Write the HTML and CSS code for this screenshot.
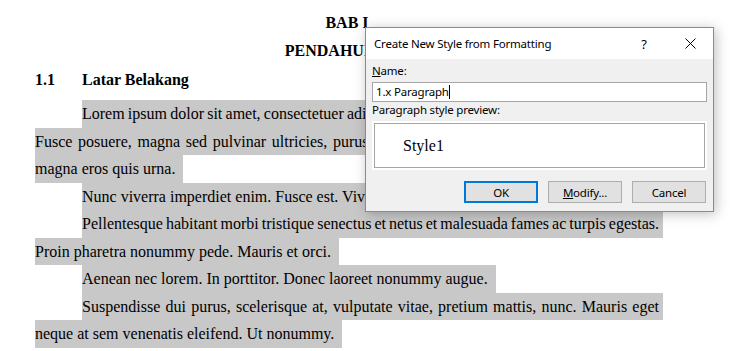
FILE: index.html
```html
<!DOCTYPE html>
<html lang="id">
<head>
    <meta charset="UTF-8">
    <meta name="viewport" content="width=device-width, initial-scale=1.0">
    <title>BAB I - Pendahuluan</title>
    <link rel="stylesheet" href="styles.css">
</head>
<body>
    <div class="page">
        <div class="title">BAB I</div>
        <div class="title">PENDAHULUAN</div>
        <div class="subhead"><span class="num">1.1</span>Latar Belakang</div>

        <div class="para">
            <div class="ln first just">Lorem ipsum dolor sit amet, consectetuer adipiscing elit. Maecenas porttitor congue massa.</div>
            <div class="ln just">Fusce posuere, magna sed pulvinar ultricies, purus lectus malesuada libero, sit amet commodo</div>
            <div class="ln last">magna eros quis urna.</div>
        </div>
        <div class="para">
            <div class="ln first last">Nunc viverra imperdiet enim. Fusce est. Vivamus a tellus.</div>
        </div>
        <div class="para">
            <div class="ln first just">Pellentesque habitant morbi tristique senectus et netus et malesuada fames ac turpis egestas.</div>
            <div class="ln last">Proin pharetra nonummy pede. Mauris et orci.</div>
        </div>
        <div class="para">
            <div class="ln first last">Aenean nec lorem. In porttitor. Donec laoreet nonummy augue.</div>
        </div>
        <div class="para">
            <div class="ln first just">Suspendisse dui purus, scelerisque at, vulputate vitae, pretium mattis, nunc. Mauris eget</div>
            <div class="ln last">neque at sem venenatis eleifend. Ut nonummy.</div>
        </div>
    </div>

    <!-- dialog Word: Create New Style from Formatting -->
    <div class="dialog">
        <div class="dlg-head">
            <span class="dlg-title">Create New Style from Formatting</span>
            <span class="cap-btn">?</span>
            <span class="cap-btn">
                <svg width="11" height="11" viewBox="0 0 11 11">
                    <path d="M0.5 0.5 L10.5 10.5 M10.5 0.5 L0.5 10.5" stroke="#000" stroke-width="1" fill="none"/>
                </svg>
            </span>
        </div>
        <div class="dlg-body">
            <div class="label"><u>N</u>ame:</div>
            <div class="input">1.x Paragraph<span class="caret"></span></div>
            <div class="label">Paragraph style preview:</div>
            <div class="preview">
                <div class="preview-box">Style1</div>
            </div>
            <div class="buttons">
                <span class="btn default">OK</span>
                <span class="btn"><u>M</u>odify...</span>
                <span class="btn">Cancel</span>
            </div>
        </div>
    </div>
</body>
</html>
```

FILE: styles.css
```css
body {
    margin: 0;
    background-color: white;
    font-family: "Liberation Serif", "Times New Roman", serif;
    font-size: 16px;
    color: #000;
    overflow: hidden;
}
.page {
    width: 624px;
    padding: 9px 0 0 35px;
    line-height: 27.5px;
}
.title {
    text-align: center;
    font-weight: bold;
}
.subhead {
    display: flex;
    font-weight: bold;
    margin-top: 2px;
    margin-bottom: 6.5px;
}
.subhead .num {
    width: 47px;
}
.ln {
    background-color: #c8c8c8;
    white-space: nowrap;
}
.ln.first {
    margin-left: 47px;
}
/* Word rapatkan sedikit, lalu justify merentangkan lagi */
.ln.just {
    text-align: justify;
    text-align-last: justify;
    word-spacing: -1px;
    margin-right: -4px;
    padding-right: 4px;
}
.ln.last {
    width: fit-content;
    padding-right: 8px;
}

/* dialog */
.dialog {
    position: absolute;
    left: 365px;
    top: 27px;
    width: 349px;
    height: 185px;
    box-sizing: border-box;
    border: 1px solid #8a8a8a;
    background-color: #f0f0f0;
    box-shadow: 2px 2px 12px rgba(0, 0, 0, 0.25);
    font-family: "Noto Sans", "Open Sans", sans-serif;
    font-size: 11.5px;
    letter-spacing: -0.2px;
    color: #000;
}
.dlg-head {
    display: flex;
    align-items: center;
    height: 31px;
    padding-left: 8px;
    background-color: white;
}
.dlg-title {
    flex: 1;
}
.cap-btn {
    display: flex;
    align-items: center;
    justify-content: center;
    width: 46px;
    height: 31px;
    font-size: 13px;
}
.dlg-body {
    padding: 4px 6px 0 6px;
}
.label {
    line-height: 16px;
}
.input {
    margin-top: 3px;
    height: 20px;
    box-sizing: border-box;
    border: 1px solid #a6a6a6;
    background-color: white;
    padding-left: 3px;
    line-height: 18px;
}
.caret {
    display: inline-block;
    width: 1px;
    height: 14px;
    background-color: #000;
    vertical-align: -3px;
}
.preview {
    margin-top: 3px;
    padding: 2px;
    background-color: white;
}
.preview-box {
    display: flex;
    align-items: center;
    height: 45px;
    box-sizing: border-box;
    border: 1px solid #a6a6a6;
    padding-left: 28px;
    font-family: "Liberation Serif", "Times New Roman", serif;
    font-size: 16px;
    letter-spacing: 0;
}
.buttons {
    display: flex;
    justify-content: flex-end;
    gap: 10px;
    margin-top: 11px;
    padding-right: 1px;
}
.btn {
    display: flex;
    align-items: center;
    justify-content: center;
    width: 74px;
    height: 22px;
    box-sizing: border-box;
    border: 1px solid #adadad;
    background-color: #e1e1e1;
}
.btn.default {
    border: 2px solid #0078d7;
}
```
